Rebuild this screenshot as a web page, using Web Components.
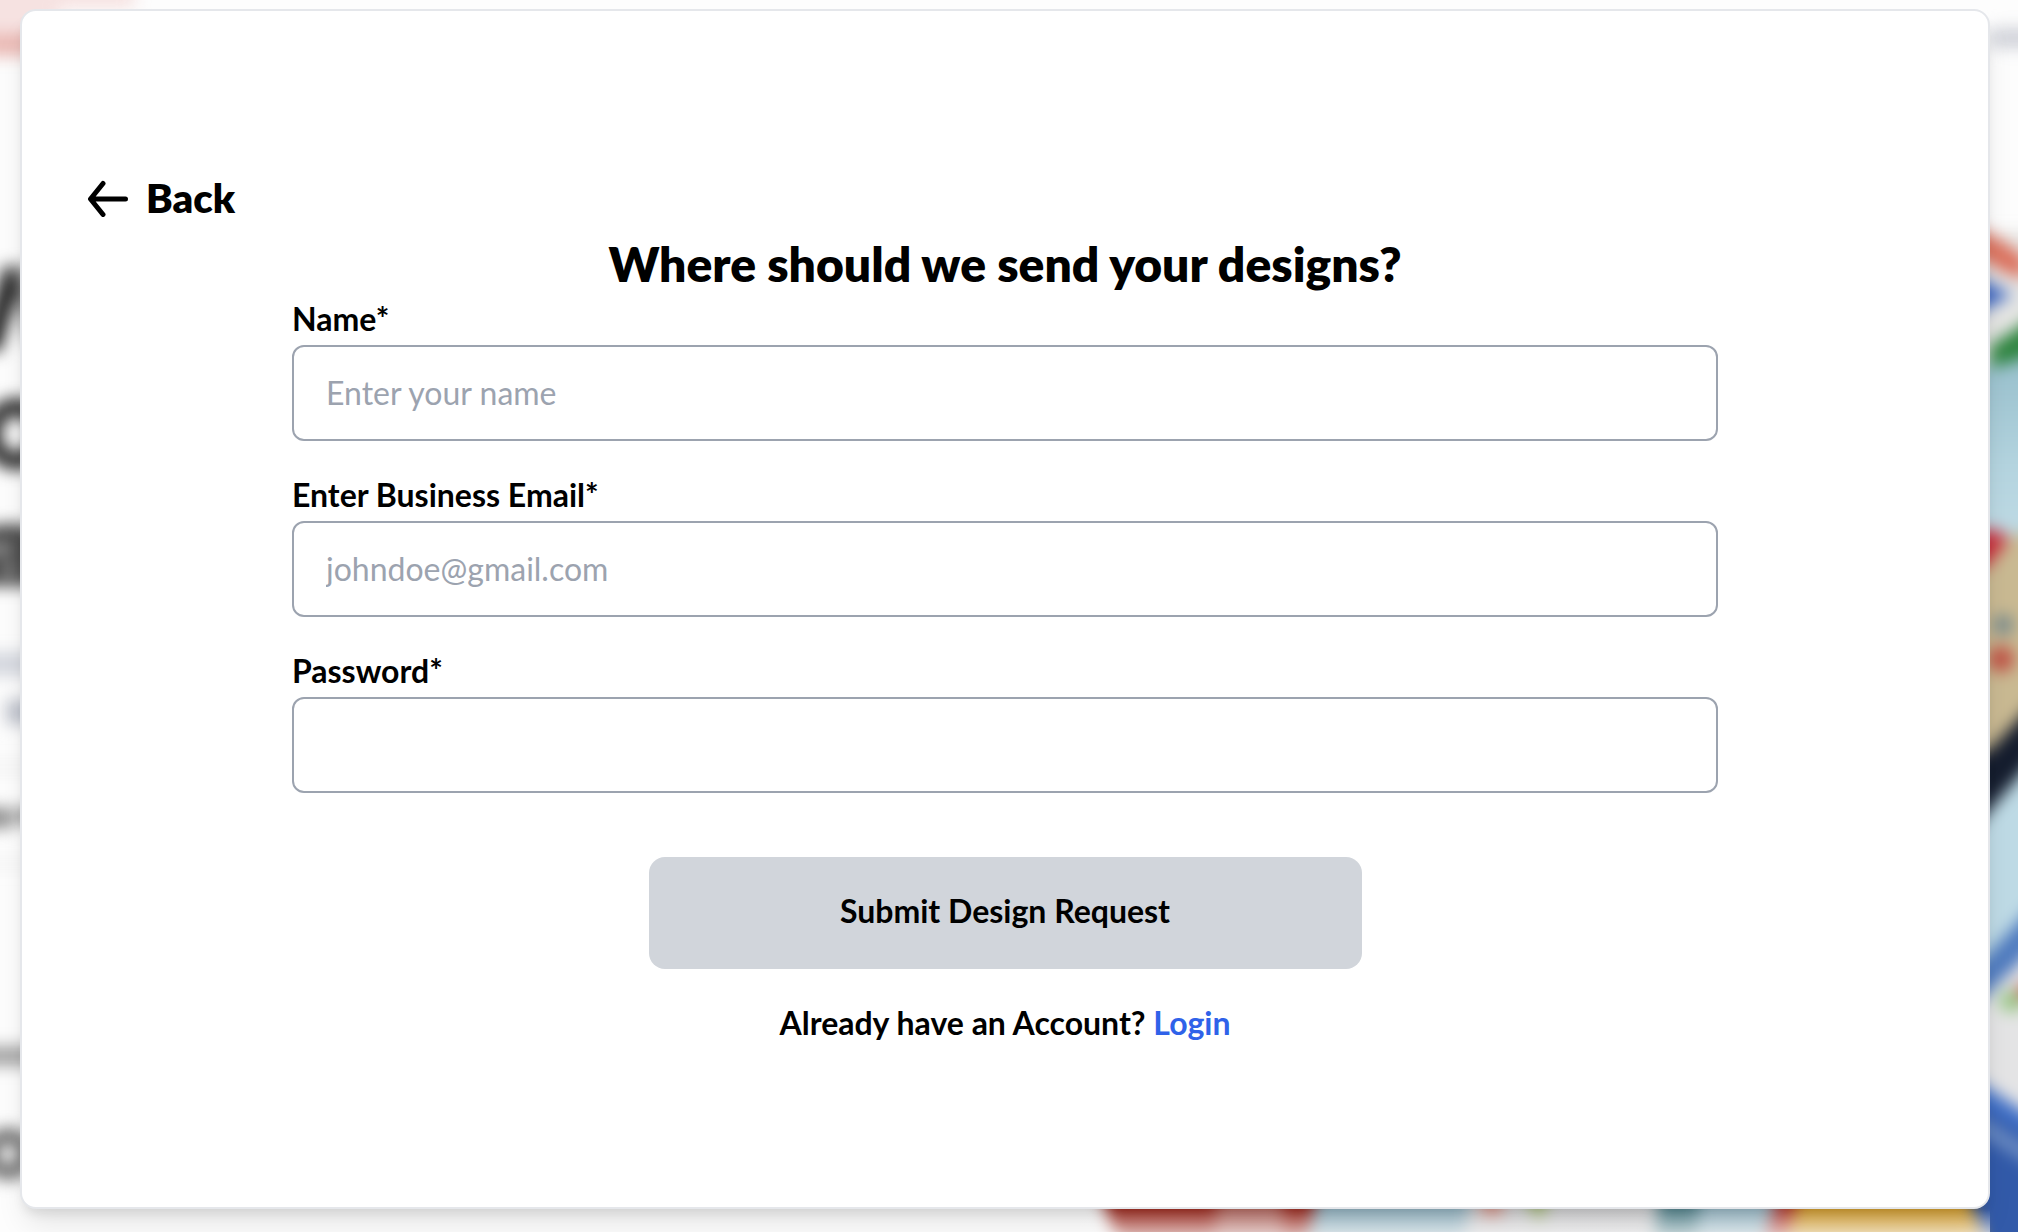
<!DOCTYPE html>
<html lang="en">
<head>
<meta charset="utf-8">
<meta name="viewport" content="width=device-width, initial-scale=1">
<title>Design Request</title>
<style>
  body { margin: 0; background: #fdfdfd; color: #000; font-family: Lato, "Liberation Sans", sans-serif; }
</style>
</head>
<body>
<request-page>
  <page-backdrop slot="backdrop"></page-backdrop>
  <modal-card>
    <back-button slot="nav">Back</back-button>
    <request-form heading="Where should we send your designs?">
      <text-field label="Name*" placeholder="Enter your name" type="text"></text-field>
      <text-field label="Enter Business Email*" placeholder="johndoe@gmail.com" type="email"></text-field>
      <text-field label="Password*" type="password"></text-field>
      <submit-button slot="action">Submit Design Request</submit-button>
      <login-prompt slot="footer" link="Login">Already have an Account?</login-prompt>
    </request-form>
  </modal-card>
</request-page>

<script>
  class Base extends HTMLElement {
    connectedCallback() {
      if (this.shadowRoot) return;
      this.attachShadow({ mode: 'open' }).innerHTML =
        '<style>*{box-sizing:border-box}:host{display:block;box-sizing:border-box}</style>' + this.render();
    }
  }

  customElements.define('request-page', class extends Base {
    render() {
      return `<style>
        :host { display: flex; position: relative; min-height: 100vh; padding: 9px 28px 23px 20px; overflow: hidden; }
        ::slotted(modal-card) { flex: 1; }
      </style><slot name="backdrop"></slot><slot></slot>`;
    }
  });

  // Blurred landing page that shows round the modal.
  customElements.define('page-backdrop', class extends Base {
    render() {
      return `<style>
        :host { position: absolute; inset: 0; }
        svg { display: block; width: 100%; height: 100%; }
      </style>
      <svg viewBox="0 0 2018 1232" preserveAspectRatio="none" aria-hidden="true">
        <defs>
          <filter id="b" filterUnits="userSpaceOnUse" x="-60" y="-60" width="2140" height="1360" color-interpolation-filters="sRGB"><feGaussianBlur stdDeviation="8"/></filter>
          <linearGradient id="fade" x1="0" y1="0" x2="0" y2="1"><stop offset="0" stop-color="#fff" stop-opacity="0"/><stop offset="1" stop-color="#fff" stop-opacity=".6"/></linearGradient>
          <linearGradient id="sky" x1="0" y1="0" x2="0" y2="1"><stop offset="0" stop-color="#8fb9c6"/><stop offset=".6" stop-color="#b4d4df"/><stop offset="1" stop-color="#c2dce6"/></linearGradient>
        </defs>
        <g filter="url(#b)">
          <path fill="#f6e2e1" d="M-40-40H134V8H60V56H-40z"/>
          <path fill="#eab8b3" d="M-40 34H40V56H-40z"/>
          <path fill="none" stroke="#1c1c1c" stroke-width="20" stroke-linejoin="bevel" d="M-10 350L14 268"/>
          <path fill="none" stroke="#777" stroke-width="14" d="M18 266L36 346"/>
          <ellipse cx="16" cy="434" rx="24" ry="27" fill="none" stroke="#2c2c2c" stroke-width="18"/>
          <path fill="#4a4a4a" d="M-20 530Q10 518 40 530V586H-20z"/>
          <path fill="none" stroke="#aaa" stroke-width="9" d="M-20 549H12M2 570H16"/>
          <path fill="#d4d7de" d="M-40 652H40V676H-40z"/>
          <path fill="#bcc0ca" d="M6 700H40V724H6z"/>
          <path fill="#f3f3f3" d="M-40 762H40V772H-40zM-40 860H40V868H-40z"/>
          <path fill="#8a8a8a" d="M-40 808H12V828H-40zM17 808H40V824H17z"/>
          <path fill="#a4a4a4" d="M-40 1046H40V1066H-40z"/>
          <ellipse cx="8" cy="1154" rx="18" ry="18" fill="none" stroke="#666" stroke-width="15"/>

          <path fill="#cfd1d8" d="M1990 28H2060V48H1990z"/>
          <path fill="#e5e5e3" d="M1960 232H2070V380H1960z"/>
          <path fill="#dc705c" d="M1966 222L2000 240L2026 258V280L2004 272L1966 250z"/>
          <path fill="#3d67c4" d="M1960 268L2012 295L1960 322z"/>
          <path fill="url(#sky)" d="M1960 376L2070 326V560H1960z"/>
          <path fill="#2f8540" d="M2060 300V346L2018 360L1990 368V346z"/>
          <path fill="#c9b992" d="M1960 570L2006 536L2070 530V724L1990 752H1960z"/>
          <path fill="#c92f3d" d="M1950 530H1998L2008 540L1988 566L1950 578z"/>
          <circle cx="2003" cy="625" r="10" fill="#6f858c"/>
          <circle cx="2001" cy="659" r="13" fill="#bf4f42"/>
          <path fill="#bedae5" d="M1960 800L2070 728V920L1960 990z"/>
          <path fill="#151d2e" d="M1950 760L1990 750L2050 686V740L1950 856z"/>
          <path fill="#e4e4e5" d="M1960 1000L2070 930V1140L1960 1080z"/>
          <path fill="#4f7bbf" d="M1950 996L2070 866V914L1950 1030z"/>
          <ellipse cx="2012" cy="1001" rx="13" ry="11" fill="#98c886"/>
          <circle cx="2026" cy="991" r="9" fill="#c4665e"/>
          <path fill="#325aa9" d="M1930 1050L2070 1150V1270H1930z"/>
          <path fill="#4070c8" d="M1930 1050L2070 1142V1160L1930 1076z"/>
          <path fill="#7392c6" d="M1950 1098L2070 1174V1190L1950 1114z"/>

          <path fill="#a8362b" d="M1090 1160H1330L1302 1270H1136L1112 1230z"/>
          <path fill="#bd736b" d="M1218 1160H1284L1282 1270H1214z"/>
          <path fill="#9bbcca" d="M1324 1160H1474L1462 1270H1302z"/>
          <path fill="#d8d8da" d="M1474 1160H1664L1650 1270H1462z"/>
          <path fill="#e09a8e" d="M1482 1190H1502V1218H1482z"/>
          <path fill="#aac274" d="M1522 1190H1550L1540 1226z"/>
          <path fill="#5f8f98" d="M1662 1160H1704L1694 1270H1652z"/>
          <path fill="#a2c2cf" d="M1704 1160H1782L1764 1270H1694z"/>
          <path fill="#c0453e" d="M1786 1160H1810L1790 1270H1758z"/>
          <path fill="#dba536" d="M1808 1160H1956L1994 1270H1780z"/>
        </g>
        <path fill="url(#fade)" d="M1080 1209H1990V1232H1080z"/>
      </svg>`;
    }
  });

  customElements.define('modal-card', class extends Base {
    render() {
      return `<style>
        :host { position: relative; display: flex; flex-direction: column; background: #fff;
          border: 2px solid #e5e7eb; border-radius: 16px; padding: 164px 64px 64px;
          box-shadow: 0 20px 30px -6px rgba(0,0,0,.1), 0 8px 12px -4px rgba(0,0,0,.1); }
      </style><slot name="nav"></slot><slot></slot>`;
    }
  });

  customElements.define('back-button', class extends Base {
    render() {
      return `<style>
        button { display: flex; align-items: center; gap: 18px; border: 0; padding: 0; background: none;
          color: inherit; font: 800 40px/46px Lato, sans-serif; cursor: pointer; }
        svg { display: block; width: 42px; height: 38px; }
      </style>
      <button type="button">
        <svg viewBox="0 0 42 38" fill="none" stroke="#000" stroke-width="5" stroke-linecap="round" stroke-linejoin="round" aria-hidden="true"><path d="M39.500 20H5M17 4.500L4.500 20L17 35.500"/></svg>
        <slot></slot>
      </button>`;
    }
  });

  customElements.define('request-form', class extends Base {
    render() {
      return `<style>
        :host { padding: 14px 206px 0; }
        h1 { margin: 0 0 2px; text-align: center; font-size: 48px; line-height: 58px; font-weight: 800; }
        .fields { display: flex; flex-direction: column; gap: 30px; }
        .action { display: flex; justify-content: center; padding: 64px 0 30px; }
      </style>
      <form>
        <h1>${this.getAttribute('heading')}</h1>
        <div class="fields"><slot></slot></div>
        <div class="action"><slot name="action"></slot></div>
        <slot name="footer"></slot>
      </form>`;
    }
  });

  customElements.define('text-field', class extends Base {
    render() {
      return `<style>
        label { display: block; margin-bottom: 2px; font-size: 32px; line-height: 48px; font-weight: 700; }
        input { display: block; width: 100%; height: 96px; padding: 0 32px 2px; border: 2px solid #9ca3af;
          border-radius: 12px; background: #fff; color: inherit; font: 400 32px/48px Lato, sans-serif; outline: 0; }
        input::placeholder { color: #9ca3af; opacity: 1; }
      </style>
      <label for="field">${this.getAttribute('label')}</label>
      <input id="field" type="${this.getAttribute('type')}" placeholder="${this.getAttribute('placeholder') || ''}">`;
    }
  });

  customElements.define('submit-button', class extends Base {
    render() {
      return `<style>
        :host { width: 50%; }
        button { display: block; width: 100%; padding: 30px 32px 34px; border: 0; border-radius: 16px; background: #d1d5db;
          color: #000; font: 700 32px/48px Lato, sans-serif; }
      </style><button type="button"><slot></slot></button>`;
    }
  });

  customElements.define('login-prompt', class extends Base {
    render() {
      return `<style>
        p { margin: 0; text-align: center; font-size: 32px; line-height: 48px; font-weight: 700; }
        a { color: #2f62e9; text-decoration: none; }
      </style><p><slot></slot> <a href="#login">${this.getAttribute('link')}</a></p>`;
    }
  });
</script>
</body>
</html>
